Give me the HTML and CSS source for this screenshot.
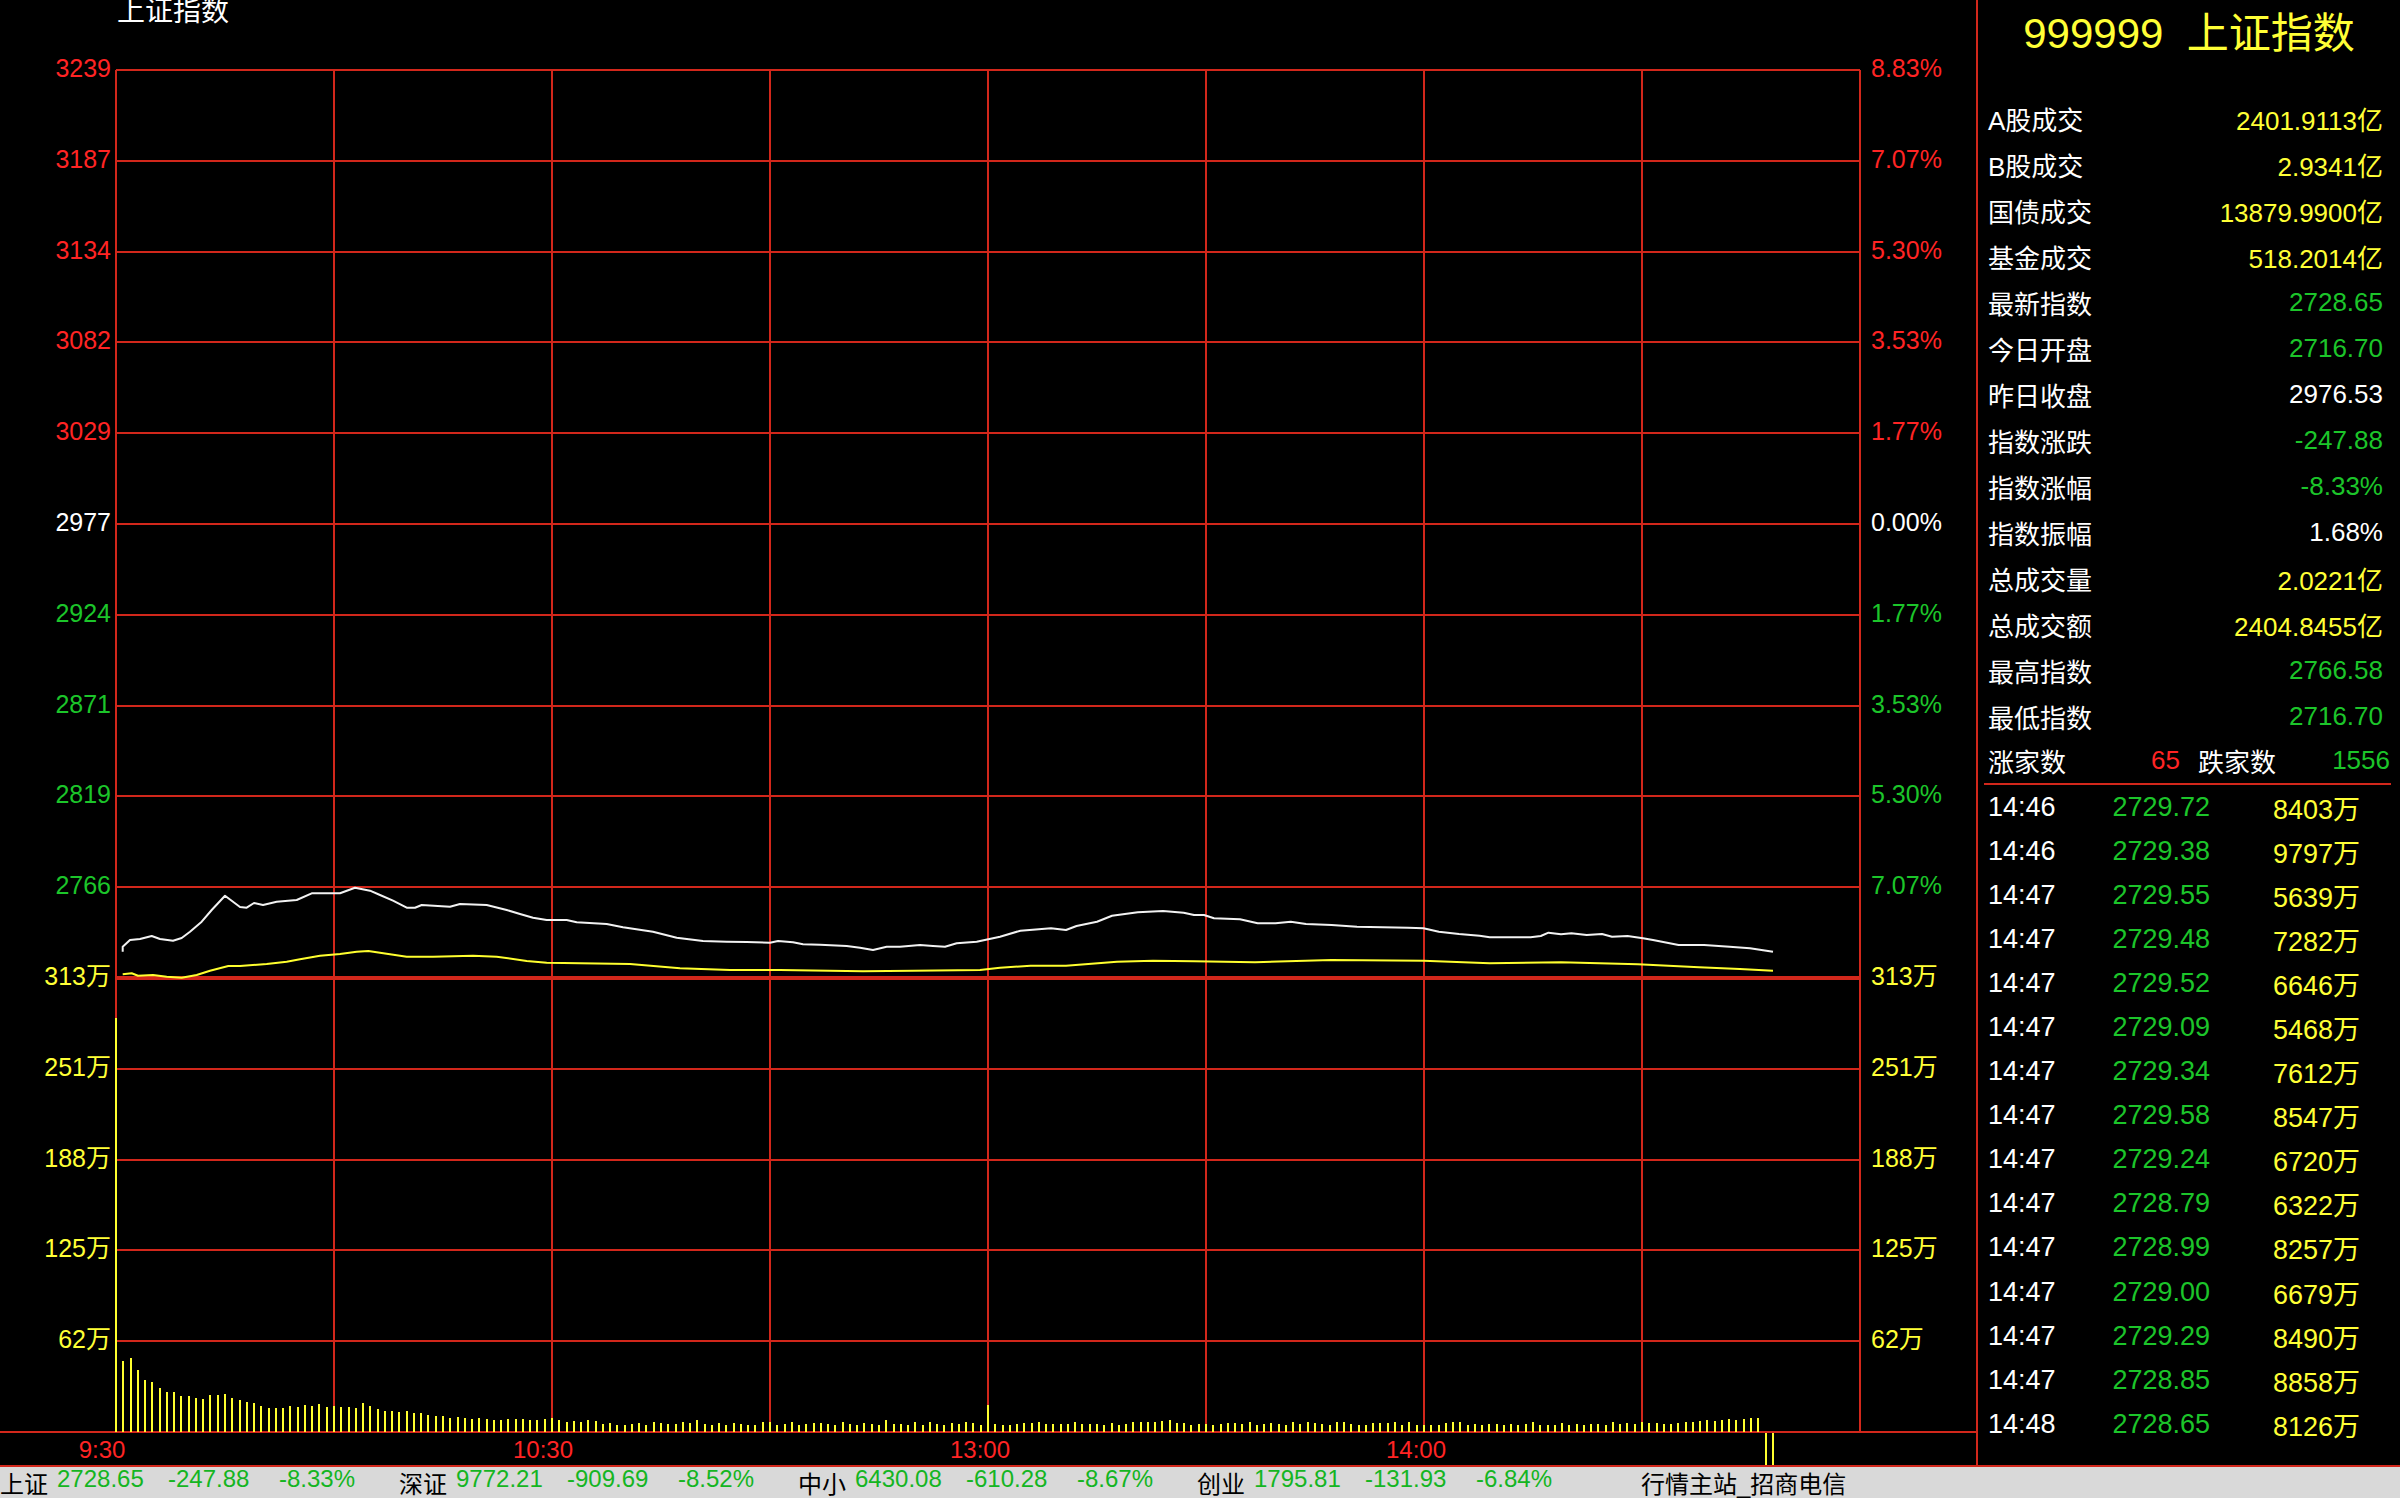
FILE: index.html
```html
<!DOCTYPE html>
<html lang="zh-CN">
<head>
  <meta charset="UTF-8">
  <title>上证指数 分时走势</title>
  <link rel="stylesheet" href="styles.css">
</head>
<body>
  <div class="screen">
    <div class="main">
      <div class="chart-pane">
        <svg id="chart" class="chart" width="1976" height="1465" viewBox="0 0 1976 1465">
          <text class="chart-title" x="117" y="21">上证指数</text>
          <g id="grid"></g>
          <g id="labels"></g>
          <g id="bars"></g>
          <polyline class="line-price" points="122.7,951.7 122.7,946.7 130,940 140,939 151.7,936 160,939 173,940.7 181.7,938 190,931.7 201.7,921.7 211.7,910 225,895.7 240,907 246.7,907.7 254,903 263,905 276.7,901.7 296.7,900 311.7,893.3 340,893.3 355,887.7 370,890.7 380,895 393,900.7 406.7,907.7 415,907.7 421.7,905 450,906.7 460,904 486.7,905 506.7,910 520,914 533,917.7 546.7,920 566.7,920 576.7,922.3 606.7,924 623,927.3 653,931.7 676.7,937.7 703,941 726.7,941.7 746.7,942 770,942.7 778,941 793,942.3 803,944.3 820,944.7 846.7,946 860,947.7 873,950 886.7,946.7 900,946.7 920,945 933,946 945,946.7 956.7,943.3 976.7,941.7 988.3,939.3 1000,936.7 1020.4,930.7 1051,928.3 1066,930 1076.5,926 1097,921.7 1112,915.7 1137.8,912.3 1163,911 1183.7,912.7 1194,915 1204,915 1214,918.3 1240,919.3 1257.7,923.3 1275.5,923.3 1290.8,921.7 1306,924 1331.6,925 1357,926.7 1382.7,927.3 1408,927.7 1423.5,928.3 1438.8,931.7 1459,934 1479.6,935.7 1489.8,937.3 1510,937.3 1530.6,937.3 1540.8,936 1548.5,932.7 1561,934.3 1571.4,933.3 1586.7,935 1602,934 1612,936.7 1627.5,936 1643,938.3 1653,940 1678.6,945 1704,945 1729.6,946.7 1750,948.3 1773,951.7"/>
          <polyline class="line-avg" points="122.7,974.3 131.7,973.3 138,975.7 153,975 166.7,976.7 181.7,977.7 196.7,975 210,970.7 228.3,966 240,966 266.7,964 286.7,961.7 300,959.3 320,955.7 340,954 356.7,951.7 368.3,951 383.3,953.3 406.7,956.7 433,956.7 473,955.7 496.7,956.7 526.7,961 546.7,962.7 580,963.3 630,964 680,968.3 730,970 780,970 863,971.3 913,970.7 980,970 1000,967.7 1030.6,965.7 1066,965.7 1117,961.7 1153,960.7 1194,961.3 1255,962.3 1331.6,960 1423.5,960.7 1489.8,963.3 1561,962.3 1637.8,964.3 1699,967.3 1739.8,969 1773,970.7"/>
        </svg>
      </div>

      <aside class="quote-panel">
        <h1 class="quote-title">999999&nbsp; 上证指数</h1>
        <ul class="stat-list">
          <li class="stat-row"><span>A股成交</span><span class="vol">2401.9113亿</span></li>
          <li class="stat-row"><span>B股成交</span><span class="vol">2.9341亿</span></li>
          <li class="stat-row"><span>国债成交</span><span class="vol">13879.9900亿</span></li>
          <li class="stat-row"><span>基金成交</span><span class="vol">518.2014亿</span></li>
          <li class="stat-row"><span>最新指数</span><span class="down">2728.65</span></li>
          <li class="stat-row"><span>今日开盘</span><span class="down">2716.70</span></li>
          <li class="stat-row"><span>昨日收盘</span><span class="flat">2976.53</span></li>
          <li class="stat-row"><span>指数涨跌</span><span class="down">-247.88</span></li>
          <li class="stat-row"><span>指数涨幅</span><span class="down">-8.33%</span></li>
          <li class="stat-row"><span>指数振幅</span><span class="flat">1.68%</span></li>
          <li class="stat-row"><span>总成交量</span><span class="vol">2.0221亿</span></li>
          <li class="stat-row"><span>总成交额</span><span class="vol">2404.8455亿</span></li>
          <li class="stat-row"><span>最高指数</span><span class="down">2766.58</span></li>
          <li class="stat-row"><span>最低指数</span><span class="down">2716.70</span></li>
        </ul>
        <div class="breadth-row">
          <div class="breadth-cell"><span>涨家数</span><span class="up">65</span></div>
          <div class="breadth-cell"><span>跌家数</span><span class="down">1556</span></div>
        </div>
        <ul class="tick-list">
          <li class="tick-row"><span>14:46</span><span class="down">2729.72</span><span class="vol">8403万</span></li>
          <li class="tick-row"><span>14:46</span><span class="down">2729.38</span><span class="vol">9797万</span></li>
          <li class="tick-row"><span>14:47</span><span class="down">2729.55</span><span class="vol">5639万</span></li>
          <li class="tick-row"><span>14:47</span><span class="down">2729.48</span><span class="vol">7282万</span></li>
          <li class="tick-row"><span>14:47</span><span class="down">2729.52</span><span class="vol">6646万</span></li>
          <li class="tick-row"><span>14:47</span><span class="down">2729.09</span><span class="vol">5468万</span></li>
          <li class="tick-row"><span>14:47</span><span class="down">2729.34</span><span class="vol">7612万</span></li>
          <li class="tick-row"><span>14:47</span><span class="down">2729.58</span><span class="vol">8547万</span></li>
          <li class="tick-row"><span>14:47</span><span class="down">2729.24</span><span class="vol">6720万</span></li>
          <li class="tick-row"><span>14:47</span><span class="down">2728.79</span><span class="vol">6322万</span></li>
          <li class="tick-row"><span>14:47</span><span class="down">2728.99</span><span class="vol">8257万</span></li>
          <li class="tick-row"><span>14:47</span><span class="down">2729.00</span><span class="vol">6679万</span></li>
          <li class="tick-row"><span>14:47</span><span class="down">2729.29</span><span class="vol">8490万</span></li>
          <li class="tick-row"><span>14:47</span><span class="down">2728.85</span><span class="vol">8858万</span></li>
          <li class="tick-row"><span>14:48</span><span class="down">2728.65</span><span class="vol">8126万</span></li>
        </ul>
      </aside>
    </div>

    <footer class="status-bar">
      <div class="index-group"><span class="idx-name">上证</span><span class="idx-val">2728.65</span><span class="idx-chg">-247.88</span><span class="idx-pct">-8.33%</span></div>
      <div class="index-group"><span class="idx-name">深证</span><span class="idx-val">9772.21</span><span class="idx-chg">-909.69</span><span class="idx-pct">-8.52%</span></div>
      <div class="index-group"><span class="idx-name">中小</span><span class="idx-val">6430.08</span><span class="idx-chg">-610.28</span><span class="idx-pct">-8.67%</span></div>
      <div class="index-group"><span class="idx-name">创业</span><span class="idx-val">1795.81</span><span class="idx-chg">-131.93</span><span class="idx-pct">-6.84%</span></div>
      <div class="server-name">行情主站_招商电信</div>
    </footer>
  </div>

  <script>
    // chart geometry (px inside the svg)
    const NS = 'http://www.w3.org/2000/svg';
    const TOP = 70, STEP = 90.8, LEFT = 116, RIGHT = 1860, COL = 218, BOTTOM = 1432;
    const MINUTE = (RIGHT - LEFT) / 240;

    function add(parent, tag, attrs, text) {
      const node = document.createElementNS(NS, tag);
      for (const k in attrs) node.setAttribute(k, attrs[k]);
      if (text) node.textContent = text;
      parent.appendChild(node);
      return node;
    }

    const grid = document.getElementById('grid');
    const labels = document.getElementById('labels');
    const bars = document.getElementById('bars');

    const leftText = ['3239','3187','3134','3082','3029','2977','2924','2871','2819','2766','313万','251万','188万','125万','62万'];
    const rightText = ['8.83%','7.07%','5.30%','3.53%','1.77%','0.00%','1.77%','3.53%','5.30%','7.07%','313万','251万','188万','125万','62万'];

    for (let k = 0; k < 15; k++) {
      const y = Math.round(TOP + k * STEP);
      add(grid, 'line', { x1: LEFT, x2: RIGHT, y1: y, y2: y, class: k === 10 ? 'grid grid-thick' : 'grid' });
      let tone = 'vol';
      if (k < 5) tone = 'up';
      else if (k === 5) tone = 'flat';
      else if (k < 10) tone = 'down';
      add(labels, 'text', { x: 111, y: y + 7, class: 'axis-label axis-left ' + tone }, leftText[k]);
      add(labels, 'text', { x: 1871, y: y + 7, class: 'axis-label ' + tone }, rightText[k]);
    }
    add(grid, 'line', { x1: 0, x2: 1976, y1: BOTTOM, y2: BOTTOM, class: 'grid' });

    for (let j = 0; j <= 8; j++) {
      const x = LEFT + j * COL;
      add(grid, 'line', { x1: x, x2: x, y1: TOP, y2: BOTTOM, class: 'grid' });
    }

    [['9:30', 102], ['10:30', 543], ['13:00', 980], ['14:00', 1416]].forEach(function (t) {
      add(labels, 'text', { x: t[1], y: 1458, class: 'time-label' }, t[0]);
    });

    // volume bars, one per minute
    const early = [414,71,74,62,52,50,44,40,40,36,36,34,33,37,37,38,34,32,30,29,26,24,24,24,26,25,27,26,28,25,
      26,25,25,24,29,26,23,21,21,20,21,19,19,17,16,16,14,15,14,13,14,13,12,12,13,13,13,12,12,13,14,12,10,11,10,12,11];
    const late = { 80: 12, 106: 12, 120: 27, 144: 11, 145: 12, 215: 9, 216: 10, 217: 10, 218: 11, 219: 12,
      220: 11, 221: 12, 222: 13, 223: 12, 224: 13, 225: 14, 226: 14 };
    let seed = 7;
    function rnd() {
      seed = (seed * 9301 + 49297) % 233280;
      return seed / 233280;
    }

    for (let i = 0; i <= 226; i++) {
      let h = i < early.length ? early[i] : 7 + Math.floor(rnd() * 4);
      if (late[i]) h = late[i];
      const x = Math.round(LEFT + i * MINUTE) - 1;
      add(bars, 'rect', { x: x, y: BOTTOM - h, width: 2, height: h, class: 'bar' });
    }
    // last two minutes spill below the axis
    [227, 228].forEach(function (i) {
      const x = Math.round(LEFT + i * MINUTE) - 1;
      add(bars, 'rect', { x: x, y: BOTTOM + 1, width: 2, height: 33, class: 'bar' });
    });
  </script>
</body>
</html>
```

FILE: styles.css
```css
* {
  margin: 0;
  padding: 0;
  box-sizing: border-box;
}
body {
  width: 2400px;
  height: 1498px;
  overflow: hidden;
  background: #000;
  color: #fff;
  font-family: "Liberation Sans", "Noto Sans CJK SC", sans-serif;
}
ul {
  list-style: none;
}
.up {
  color: #ff2424;
  fill: #ff2424;
}
.down {
  color: #1cc52a;
  fill: #1cc52a;
}
.flat {
  color: #fff;
  fill: #fff;
}
.vol {
  color: #ffff36;
  fill: #ffff36;
}
.screen {
  display: flex;
  flex-direction: column;
  height: 1498px;
}
.main {
  display: flex;
  height: 1465px;
}
.chart-pane {
  width: 1976px;
  height: 1465px;
}
.chart {
  display: block;
}
.chart-title {
  fill: #fff;
  font-size: 28px;
}
.grid {
  stroke: #d2271b;
  stroke-width: 2;
  shape-rendering: crispEdges;
}
.grid-thick {
  stroke-width: 4;
}
.axis-label {
  font-size: 25px;
}
.axis-left {
  text-anchor: end;
}
.time-label {
  fill: #ff2424;
  font-size: 24px;
  text-anchor: middle;
}
.bar {
  fill: #ffff2e;
  shape-rendering: crispEdges;
}
.line-price {
  fill: none;
  stroke: #f2f2f2;
  stroke-width: 2;
  stroke-linejoin: round;
}
.line-avg {
  fill: none;
  stroke: #ffff2e;
  stroke-width: 2;
  stroke-linejoin: round;
}
.quote-panel {
  width: 424px;
  border-left: 2px solid #d2271b;
  padding: 0 17px 0 10px;
}
.quote-title {
  height: 68px;
  line-height: 68px;
  text-align: center;
  font-size: 42px;
  font-weight: normal;
  color: #ffff36;
  margin: 0 -17px 27px -10px;
}
.stat-row {
  display: flex;
  justify-content: space-between;
  align-items: center;
  height: 46px;
  font-size: 26px;
}
.breadth-row {
  display: grid;
  grid-template-columns: 1fr 1fr;
  column-gap: 18px;
  height: 46px;
  margin: 0 -8px 0 -4px;
  padding: 0 1px 2px 4px;
  border-bottom: 2px solid #d2271b;
  font-size: 26px;
}
.breadth-cell {
  display: flex;
  justify-content: space-between;
  align-items: center;
}
.tick-row {
  display: grid;
  grid-template-columns: 120px 102px 150px;
  align-items: center;
  height: 44.1px;
  font-size: 27px;
}
.tick-row span:nth-child(2),
.tick-row span:nth-child(3) {
  text-align: right;
}
.status-bar {
  display: flex;
  align-items: center;
  height: 33px;
  border-top: 2px solid #d2271b;
  background: #d9d9d9;
  font-size: 24px;
  color: #000;
  white-space: nowrap;
}
.index-group {
  display: flex;
  width: 399px;
}
.idx-name {
  width: 57px;
}
.idx-val,
.idx-chg {
  width: 111px;
  color: #14b522;
}
.idx-pct {
  color: #14b522;
}
.server-name {
  margin-left: 45px;
}
```
